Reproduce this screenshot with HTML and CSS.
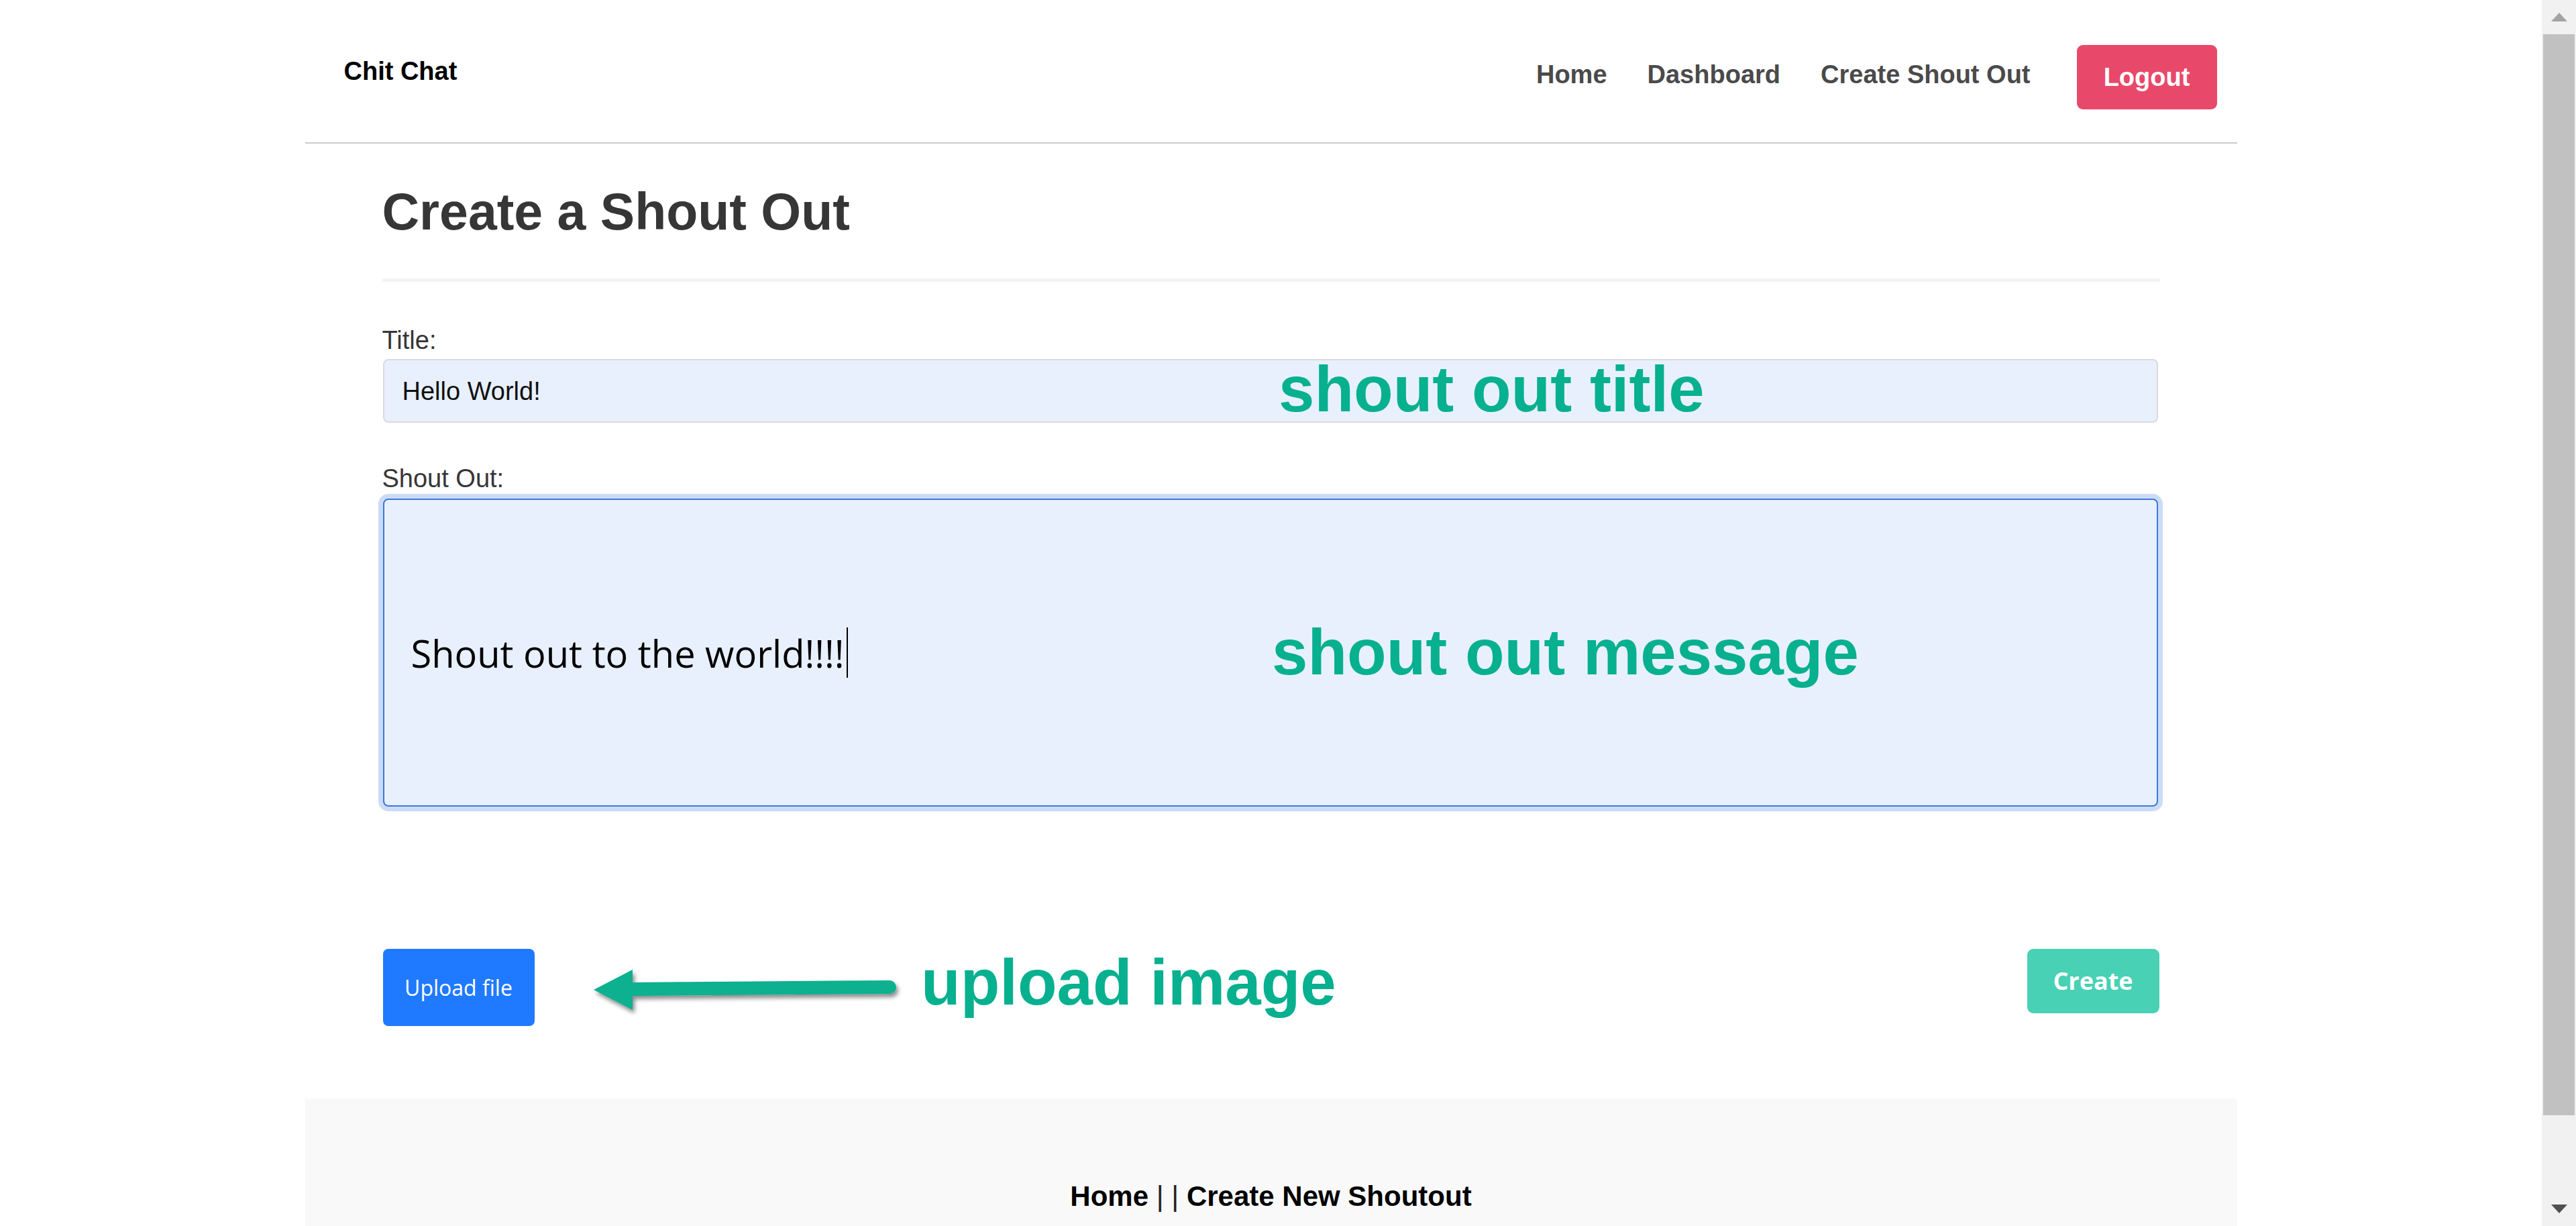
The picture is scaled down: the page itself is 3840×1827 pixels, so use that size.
FILE: index.html
```html
<!DOCTYPE html>
<html lang="en">
<head>
<meta charset="utf-8">
<title>Chit Chat - Create a Shout Out</title>
<link rel="stylesheet" href="styles.css">
</head>
<body>
<div class="viewport">
  <div class="page">
    <header class="navbar">
      <a class="brand">Chit Chat</a>
      <nav class="nav-end">
        <a class="nav-link">Home</a>
        <a class="nav-link">Dashboard</a>
        <a class="nav-link nav-link-last">Create Shout Out</a>
        <a class="btn-logout">Logout</a>
      </nav>
    </header>

    <main class="content">
      <h1 class="title">Create a Shout Out</h1>
      <hr class="rule">
      <form class="form">
        <div class="field field-title">
          <label class="label">Title:</label>
          <div class="input">Hello World!</div>
        </div>
        <div class="field field-message">
          <label class="label">Shout Out:</label>
          <div class="textarea"><span>Shout out to the world!!!!</span><span class="caret"></span></div>
        </div>
        <div class="actions">
          <button type="button" class="btn-upload">Upload file</button>
          <button type="button" class="btn-create">Create</button>
        </div>
      </form>
    </main>

    <footer class="footer">
      <p><a class="foot-link">Home</a> <span class="sep">|</span> <span class="sep">|</span> <a class="foot-link">Create New Shoutout</a></p>
    </footer>

    <p class="note note-title">shout out title</p>
    <p class="note note-message">shout out message</p>
    <p class="note note-upload">upload image</p>
    <svg class="arrow" width="480" height="90" viewBox="0 0 480 90">
      <defs>
        <filter id="sh" x="-10%" y="-30%" width="130%" height="180%">
          <feDropShadow dx="3" dy="5" stdDeviation="3" flood-color="#000" flood-opacity="0.45"/>
        </filter>
      </defs>
      <path d="M15 40 L73 10 L73 29 L456 26 A10 10 0 0 1 456 46 L73 49 L73 70 Z" fill="#07b08f" filter="url(#sh)"/>
    </svg>
  </div>

  <div class="scrollbar">
    <div class="sb-btn"><span class="sb-up"></span></div>
    <div class="sb-thumb"></div>
    <div class="sb-fill"></div>
    <div class="sb-btn"><span class="sb-down"></span></div>
  </div>
</div>
</body>
</html>
```

FILE: styles.css
```css
* { box-sizing: border-box; }

html, body {
  margin: 0;
  height: 1827px;
  overflow: hidden;
  background: #fff;
  font-family: "Liberation Sans", Arial, sans-serif;
}

.viewport {
  display: flex;
  height: 1827px;
}

.page {
  position: relative;
  flex: 0 0 3789px;
  width: 3789px;
  height: 1827px;
  overflow: hidden;
}

/* ---------- navbar ---------- */
.navbar {
  width: 2880px;
  height: 214px;
  margin: 0 auto;
  padding: 18px 30px 0 58px;
  border-bottom: 2px solid #cccccc;
  display: flex;
  align-items: center;
}

.brand {
  font: bold 38px/1 "Liberation Sans", Arial, sans-serif;
  color: #000;
  margin-bottom: 19px;
}

.nav-end {
  margin-left: auto;
  display: flex;
  align-items: center;
}

.nav-link {
  font: bold 38px/1 "Liberation Sans", Arial, sans-serif;
  color: #4a4a4a;
  margin-right: 60px;
  margin-bottom: 9px;
}

.nav-link-last { margin-right: 69px; }

.btn-logout {
  width: 209px;
  height: 96px;
  background: #e8496a;
  color: #fff;
  border-radius: 9px;
  font: bold 38px/1 "Liberation Sans", Arial, sans-serif;
  display: flex;
  align-items: center;
  justify-content: center;
}

/* ---------- content ---------- */
.content {
  width: 2650px;
  margin: 0 auto;
  padding-top: 63px;
}

.title {
  margin: 0;
  font: bold 77px/1 "Liberation Sans", Arial, sans-serif;
  color: #363636;
}

.rule {
  margin: 61px 0 0;
  border: 0;
  height: 5px;
  background: #f3f3f3;
}

.field-title { margin-top: 68px; }
.field-message { margin-top: 64px; }

.label {
  display: block;
  font: 38px/1 "Liberation Sans", Arial, sans-serif;
  color: #363636;
}

.input {
  margin: 9px 3px 0 1px;
  height: 95px;
  border: 2px solid #dadada;
  border-radius: 8px;
  background: #e8f0fe;
  padding-left: 27px;
  display: flex;
  align-items: center;
  font: 38px/1 "Liberation Sans", Arial, sans-serif;
  color: #111;
}

.textarea {
  margin: 11px 3px 0 1px;
  height: 459px;
  border: 2px solid #3b77de;
  border-radius: 8px;
  box-shadow: 0 0 0 7px rgba(50, 115, 220, 0.25);
  background: #e8f0fe;
  padding-left: 40px;
  display: flex;
  align-items: center;
  font: 56px/1 "Open Sans", "Noto Sans", sans-serif;
  color: #000;
}

.caret {
  width: 2px;
  height: 75px;
  background: #000;
  margin-left: 3px;
}

.actions {
  margin-top: 212px;
  display: flex;
  justify-content: space-between;
  align-items: flex-start;
  padding-left: 1px;
}

.btn-upload {
  width: 226px;
  height: 115px;
  border: 0;
  border-radius: 8px;
  background: #1f7aff;
  color: #fff;
  font: 32px/1 "Open Sans", "Noto Sans", sans-serif;
  padding: 0;
}

.btn-create {
  width: 197px;
  height: 96px;
  border: 0;
  border-radius: 9px;
  background: #48d1b4;
  color: #fff;
  font: bold 36px/1 "Open Sans", "Noto Sans", sans-serif;
  padding: 0;
  margin-right: 1px;
}

/* ---------- footer ---------- */
.footer {
  width: 2880px;
  height: 320px;
  margin: 108px auto 0;
  padding-top: 125px;
  background: #f9f9f9;
}

.footer p {
  margin: 0;
  text-align: center;
  font: bold 42px/1 "Liberation Sans", Arial, sans-serif;
  color: #000;
}

.foot-link { color: #000; }
.sep { font-weight: normal; color: #222; }

/* ---------- annotations (drawn over the page) ---------- */
.note {
  position: absolute;
  margin: 0;
  white-space: nowrap;
  font: bold 96px/1 "Liberation Sans", Arial, sans-serif;
  color: #07b08f;
}

.note-title { left: 1906px; top: 532px; }
.note-message { left: 1896px; top: 924px; }
.note-upload { left: 1373px; top: 1416px; }

.arrow {
  position: absolute;
  left: 870px;
  top: 1435px;
}

/* ---------- scrollbar ---------- */
.scrollbar {
  flex: 0 0 51px;
  width: 51px;
  height: 1827px;
  background: #f1f1f1;
  display: flex;
  flex-direction: column;
  align-items: center;
}

.sb-btn {
  height: 51px;
  width: 51px;
  display: flex;
  align-items: center;
  justify-content: center;
  flex: 0 0 51px;
}

.sb-up {
  width: 0;
  height: 0;
  border-left: 12.5px solid transparent;
  border-right: 12.5px solid transparent;
  border-bottom: 13px solid #a3a3a3;
}

.sb-down {
  width: 0;
  height: 0;
  border-left: 12.5px solid transparent;
  border-right: 12.5px solid transparent;
  border-top: 13px solid #505050;
}

.sb-thumb {
  width: 47px;
  height: 1611px;
  flex: 0 0 1611px;
  background: #c1c1c1;
}

.sb-fill { flex: 1; }
```
